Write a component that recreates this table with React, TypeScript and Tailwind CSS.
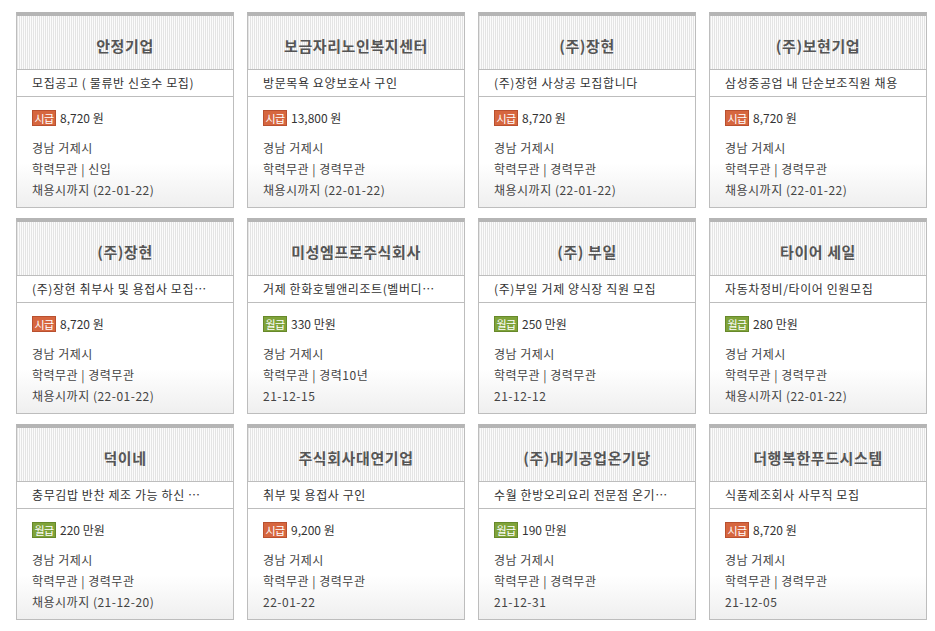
const jobs = [
  { company: "안정기업", title: "모집공고 ( 물류반 신호수 모집)", pay: "시급", amount: "8,720 원", place: "경남 거제시", cond: "학력무관 | 신입", until: "채용시까지 (22-01-22)" },
  { company: "보금자리노인복지센터", title: "방문목욕 요양보호사 구인", pay: "시급", amount: "13,800 원", place: "경남 거제시", cond: "학력무관 | 경력무관", until: "채용시까지 (22-01-22)" },
  { company: "(주)장현", title: "(주)장현 사상공 모집합니다", pay: "시급", amount: "8,720 원", place: "경남 거제시", cond: "학력무관 | 경력무관", until: "채용시까지 (22-01-22)" },
  { company: "(주)보현기업", title: "삼성중공업 내 단순보조직원 채용", pay: "시급", amount: "8,720 원", place: "경남 거제시", cond: "학력무관 | 경력무관", until: "채용시까지 (22-01-22)" },
  { company: "(주)장현", title: "(주)장현 취부사 및 용접사 모집…", pay: "시급", amount: "8,720 원", place: "경남 거제시", cond: "학력무관 | 경력무관", until: "채용시까지 (22-01-22)" },
  { company: "미성엠프로주식회사", title: "거제 한화호텔앤리조트(벨버디…", pay: "월급", amount: "330 만원", place: "경남 거제시", cond: "학력무관 | 경력10년", until: "21-12-15" },
  { company: "(주) 부일", title: "(주)부일 거제 양식장 직원 모집", pay: "월급", amount: "250 만원", place: "경남 거제시", cond: "학력무관 | 경력무관", until: "21-12-12" },
  { company: "타이어 세일", title: "자동차정비/타이어 인원모집", pay: "월급", amount: "280 만원", place: "경남 거제시", cond: "학력무관 | 경력무관", until: "채용시까지 (22-01-22)" },
  { company: "덕이네", title: "충무김밥 반찬 제조 가능 하신 …", pay: "월급", amount: "220 만원", place: "경남 거제시", cond: "학력무관 | 경력무관", until: "채용시까지 (21-12-20)" },
  { company: "주식회사대연기업", title: "취부 및 용접사 구인", pay: "시급", amount: "9,200 원", place: "경남 거제시", cond: "학력무관 | 경력무관", until: "22-01-22" },
  { company: "(주)대기공업온기당", title: "수월 한방오리요리 전문점 온기…", pay: "월급", amount: "190 만원", place: "경남 거제시", cond: "학력무관 | 경력무관", until: "21-12-31" },
  { company: "더행복한푸드시스템", title: "식품제조회사 사무직 모집", pay: "시급", amount: "8,720 원", place: "경남 거제시", cond: "학력무관 | 경력무관", until: "21-12-05" },
];

function PayBadge({ pay }: { pay: string }) {
  const hourly = pay === "시급";
  return (
    <span
      className={
        hourly
          ? "inline-flex h-4 w-6 items-center justify-center whitespace-nowrap border border-[#b9502f] bg-[#d6663f] text-[11px] leading-none tracking-[-0.5px] text-white"
          : "inline-flex h-4 w-6 items-center justify-center whitespace-nowrap border border-[#67892a] bg-[#7fa33a] text-[11px] leading-none tracking-[-0.5px] text-white"
      }
    >
      {pay}
    </span>
  );
}

export default function App() {
  return (
    <div
      className="min-h-screen bg-white pl-4 pt-3"
      style={{ fontFamily: '"Noto Sans CJK KR", "Noto Sans", sans-serif' }}
    >
      <div className="grid grid-cols-[repeat(4,218px)] gap-x-[13px] gap-y-[10px]">
        {jobs.map((job, i) => (
          <div key={i} className="border-x border-b border-t-4 border-[#bdbdbd] border-t-[#b5b5b5]">
            <div className="flex h-[53px] items-center justify-center bg-[repeating-linear-gradient(90deg,#e4e4e4_0px,#e4e4e4_1px,#fbfbfb_1px,#fbfbfb_2px)] pt-[7px] text-[15px] font-bold tracking-[0.6px] text-[#555]">
              {job.company}
            </div>
            <div className="flex h-[28px] items-center overflow-hidden whitespace-nowrap border-y border-[#bdbdbd] px-[15px] text-[12px] tracking-[0.6px] text-[#333]">
              {job.title}
            </div>
            <div className="h-[110px] bg-gradient-to-b from-white from-60% to-[#efefef] px-[15px] pt-3">
              <div className="flex items-center gap-1 text-[12px] text-[#333]">
                <PayBadge pay={job.pay} />
                <span>{job.amount}</span>
              </div>
              <div className="mt-[10px] text-[12px] leading-[21px] tracking-[0.5px] text-[#444]">
                <div>{job.place}</div>
                <div>{job.cond}</div>
                <div>{job.until}</div>
              </div>
            </div>
          </div>
        ))}
      </div>
    </div>
  );
}
